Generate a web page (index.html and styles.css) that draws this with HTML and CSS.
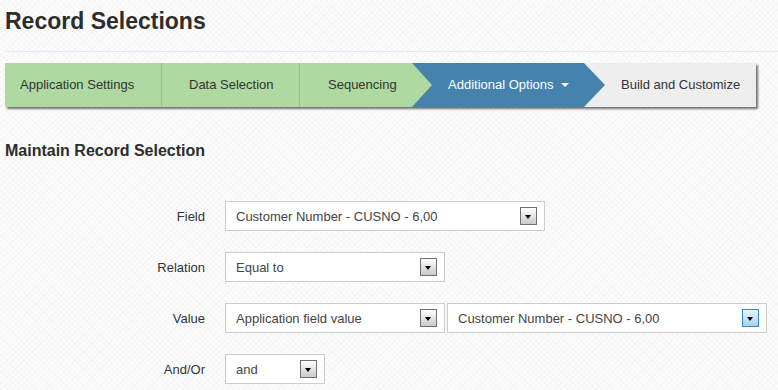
FILE: index.html
```html
<!DOCTYPE html>
<html lang="en">
<head>
    <meta charset="UTF-8">
    <title>Record Selections</title>
    <link rel="stylesheet" href="styles.css">
</head>
<body>
    <div class="page">
        <h1 class="page-title">Record Selections</h1>

        <!-- Wizard steps -->
        <div class="steps">
            <div class="step done step-settings">Application Settings</div>
            <div class="step done step-data">Data Selection</div>
            <div class="step done arrow step-seq">Sequencing</div>
            <div class="step active arrow step-options">Additional Options <span class="caret"></span></div>
            <div class="step step-build">Build and Customize</div>
        </div>

        <h3 class="section-title">Maintain Record Selection</h3>

        <!-- Selection form -->
        <div class="form">
            <div class="form-row">
                <label class="form-label">Field</label>
                <div class="select select-wide">
                    <span>Customer Number - CUSNO - 6,00</span>
                    <span class="select-btn"></span>
                </div>
            </div>
            <div class="form-row">
                <label class="form-label">Relation</label>
                <div class="select select-mid">
                    <span>Equal to</span>
                    <span class="select-btn"></span>
                </div>
            </div>
            <div class="form-row">
                <label class="form-label">Value</label>
                <div class="select select-mid">
                    <span>Application field value</span>
                    <span class="select-btn"></span>
                </div>
                <div class="select select-wide select-next">
                    <span>Customer Number - CUSNO - 6,00</span>
                    <span class="select-btn focused"></span>
                </div>
            </div>
            <div class="form-row">
                <label class="form-label">And/Or</label>
                <div class="select select-small">
                    <span>and</span>
                    <span class="select-btn"></span>
                </div>
            </div>
        </div>
    </div>
</body>
</html>
```

FILE: styles.css
```css
body {
    font-family: 'Liberation Sans', Arial, sans-serif;
    margin: 0;
    padding: 0;
    color: #333333;
    background-color: #fcfcfc;
    background-image:
        repeating-linear-gradient(45deg, rgba(0, 0, 0, 0.02) 0 1px, transparent 1px 4px),
        repeating-linear-gradient(-45deg, rgba(0, 0, 0, 0.02) 0 1px, transparent 1px 4px);
}
.page {
    padding: 0 0 0 5px;
    width: 773px;
    overflow: hidden;
}
.page-title {
    font-size: 23px;
    line-height: 26px;
    font-weight: bold;
    color: #2d2d2d;
    margin: 8px 0 0;
    padding-bottom: 17px;
    border-bottom: 1px solid #e8e8e8;
}

/* Wizard steps */
.steps {
    display: flex;
    width: 751px;
    height: 44px;
    margin-top: 11px;
    background: #eeeeee;
    box-shadow: 2px 2px 2px rgba(0, 0, 0, 0.55);
}
.step {
    position: relative;
    box-sizing: border-box;
    height: 44px;
    line-height: 44px;
    font-size: 13px;
    white-space: nowrap;
    color: #333333;
}
.step.done {
    background: #aed9a0;
}
.step.active {
    background: #4583ae;
    color: #ffffff;
}
.step-settings {
    width: 157px;
    padding-left: 15px;
    border-right: 1px solid #8fc580;
}
.step-data {
    width: 138px;
    padding-left: 27px;
    border-right: 1px solid #8fc580;
}
.step-seq {
    width: 112px;
    padding-left: 28px;
}
.step-options {
    width: 172px;
    padding-left: 36px;
}
.step-build {
    width: 172px;
    padding-left: 37px;
}
.step.arrow::after {
    content: '';
    position: absolute;
    top: 0;
    right: -20px;
    z-index: 2;
    border-top: 22px solid transparent;
    border-bottom: 22px solid transparent;
    border-left: 20px solid #aed9a0;
}
.step.active.arrow::after {
    right: -21px;
    border-left: 21px solid #4583ae;
}
.caret {
    display: inline-block;
    vertical-align: middle;
    margin-left: 4px;
    margin-top: -2px;
    border-top: 4px solid #ffffff;
    border-left: 4px solid transparent;
    border-right: 4px solid transparent;
}

.section-title {
    font-size: 16px;
    line-height: 20px;
    font-weight: bold;
    color: #2d2d2d;
    margin: 34px 0 0;
}

/* Form */
.form {
    margin-top: 40px;
}
.form-row {
    display: flex;
    align-items: center;
    height: 30px;
    margin-bottom: 21px;
}
.form-label {
    width: 200px;
    margin-right: 20px;
    text-align: right;
    font-size: 13px;
    color: #333333;
}
.select {
    display: flex;
    align-items: center;
    justify-content: space-between;
    box-sizing: border-box;
    height: 30px;
    padding: 0 7px 0 10px;
    background: #ffffff;
    border: 1px solid #cccccc;
    font-size: 13px;
    color: #444444;
}
.select-wide {
    width: 320px;
}
.select-mid {
    width: 220px;
}
.select-small {
    width: 100px;
}
.select-next {
    margin-left: 2px;
}
.select-btn {
    position: relative;
    box-sizing: border-box;
    width: 17px;
    height: 18px;
    border: 1px solid #6f6f6f;
    background: linear-gradient(#ffffff, #c9c9c9);
}
.select-btn::after {
    content: '';
    position: absolute;
    left: 4px;
    top: 7px;
    border-top: 4px solid #000000;
    border-left: 3.5px solid transparent;
    border-right: 3.5px solid transparent;
}
.select-btn.focused {
    border-color: #3d85c0;
    background: linear-gradient(#e8f5fd, #a6d3ef);
}
```
